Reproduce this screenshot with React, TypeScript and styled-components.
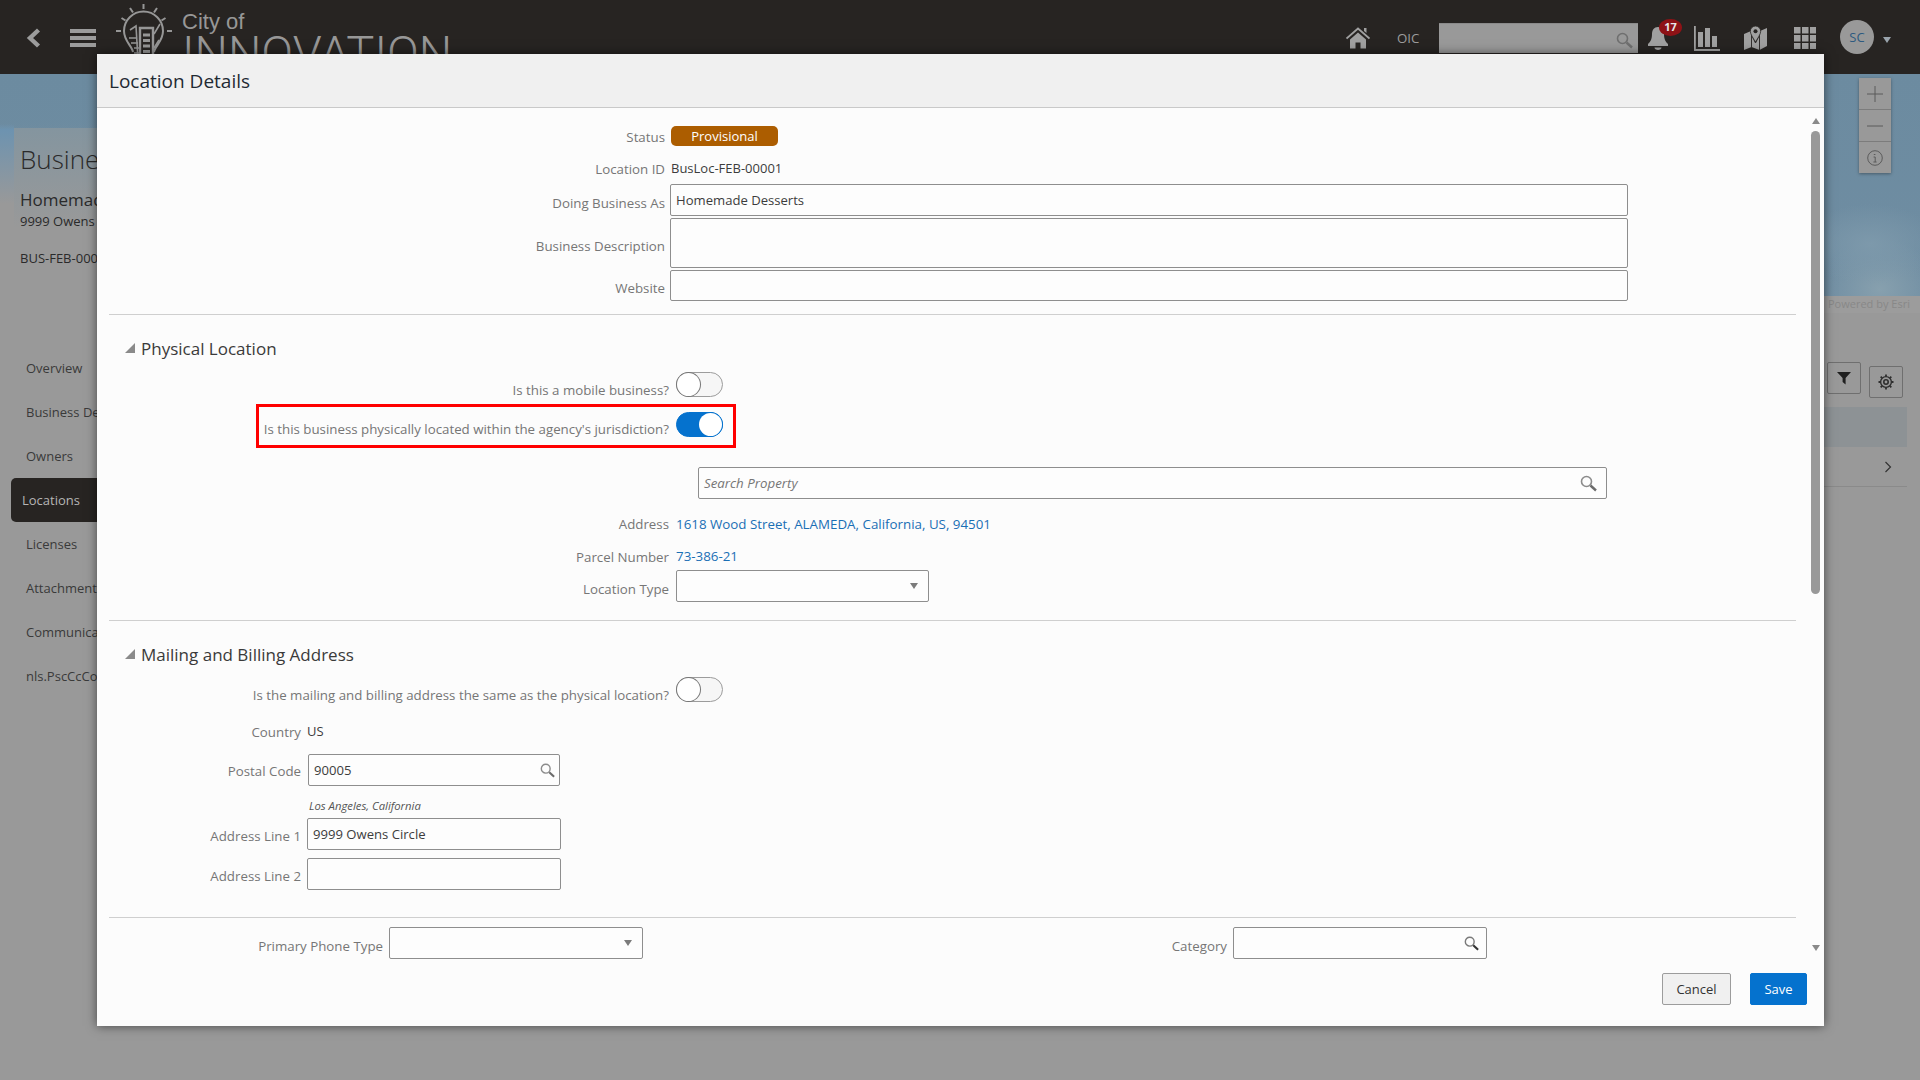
import React from 'react';
import styled, { createGlobalStyle } from 'styled-components';

const FONT = `"Open Sans", Lato, "Liberation Sans", sans-serif`;

const navItems = ['Overview', 'Business De', 'Owners', 'Locations', 'Licenses', 'Attachment', 'Communica', 'nls.PscCcCo'];

export default function App() {
  return (
    <Page>
      <GlobalStyle />
      <Header>
        <BackIcon />
        <MenuBars>
          <i />
          <i />
          <i />
        </MenuBars>
        <LogoBulb />
        <LogoText>
          <LogoCity>City of</LogoCity>
          <LogoName>INNOVATION</LogoName>
        </LogoText>
        <HeaderSpacer />
        <HeaderItem $ml={0}>
          <HomeIcon />
        </HeaderItem>
        <OicText>OIC</OicText>
        <HeaderSearch>
          <SearchIcon size={17} glass="#6f6f6f" handle="#6f6f6f" />
        </HeaderSearch>
        <BellWrap>
          <BellIcon />
          <BellBadge>17</BellBadge>
        </BellWrap>
        <HeaderItem $ml={26}>
          <ChartIcon />
        </HeaderItem>
        <HeaderItem $ml={24}>
          <MapPinIcon />
        </HeaderItem>
        <HeaderItem $ml={27}>
          <GridIcon />
        </HeaderItem>
        <Avatar>SC</Avatar>
        <AvatarCaret />
      </Header>

      <Workspace>
        <MapBand>
          <MapControls>
            <MapControl>
              <svg width="16" height="16" viewBox="0 0 16 16">
                <path d="M8 0v16M0 8h16" stroke="#5b5b5b" strokeWidth="1" fill="none" />
              </svg>
            </MapControl>
            <MapControl>
              <svg width="16" height="2" viewBox="0 0 16 2">
                <path d="M0 1h16" stroke="#5b5b5b" strokeWidth="1" fill="none" />
              </svg>
            </MapControl>
            <MapControl>
              <svg width="16" height="16" viewBox="0 0 16 16">
                <circle cx="8" cy="8" r="7.3" stroke="#5b5b5b" strokeWidth="1" fill="none" />
                <path d="M6.8 4.5h1.6M6.6 7h1.6v5M6.4 12h3.2" stroke="#5b5b5b" strokeWidth="1" fill="none" />
              </svg>
            </MapControl>
          </MapControls>
        </MapBand>
        <EsriRow>Powered by Esri</EsriRow>
        <Toolbar>
          <ToolButton $mt={0}>
            <svg width="14" height="14" viewBox="0 0 14 14">
              <path d="M0 1h14L8.6 7v6.5L5.6 11V7z" fill="#1f1f1f" />
            </svg>
          </ToolButton>
          <ToolButton $mt={4}>
            <svg width="16" height="16" viewBox="0 0 16 16" fill="none" stroke="#2e2e2e">
              <circle cx="8" cy="8" r="2.2" strokeWidth="1.6" />
              <circle cx="8" cy="8" r="5.4" strokeWidth="1.4" />
              <path d="M8 0.5v2M8 13.5v2M0.5 8h2M13.5 8h2M2.7 2.7l1.4 1.4M11.9 11.9l1.4 1.4M2.7 13.3l1.4-1.4M11.9 4.1l1.4-1.4" strokeWidth="1.8" />
            </svg>
          </ToolButton>
        </Toolbar>
        <TableHead />
        <TableRow>
          <svg width="8" height="12" viewBox="0 0 8 12">
            <path d="M1.5 1l5 5-5 5" stroke="#333" strokeWidth="1.2" fill="none" />
          </svg>
        </TableRow>

        <SidePanel>
          <PanelIntro>
            <PanelTitle>Business</PanelTitle>
            <PanelName>Homemade Desserts</PanelName>
            <PanelLine>9999 Owens Circle</PanelLine>
            <PanelId>BUS-FEB-00001</PanelId>
          </PanelIntro>
          <NavList>
            {navItems.map((item) => (
              <NavItem key={item} $active={item === 'Locations'}>
                {item}
              </NavItem>
            ))}
          </NavList>
        </SidePanel>
      </Workspace>

      <Dialog>
        <DialogHeader>Location Details</DialogHeader>
        <DialogBody>
          <Form>
            <Field $h={20} $mt={18} $gap={6}>
              <Label $w={556} $drop={2}>Status</Label>
              <StatusBadge>Provisional</StatusBadge>
            </Field>
            <Field $h={20} $mt={12} $gap={6}>
              <Label $w={556} $drop={2}>Location ID</Label>
              <Value>BusLoc-FEB-00001</Value>
            </Field>
            <Field $h={32} $mt={6} $gap={5}>
              <Label $w={556} $drop={5}>Doing Business As</Label>
              <TextBox $w={958}>Homemade Desserts</TextBox>
            </Field>
            <Field $h={50} $mt={2} $gap={5}>
              <Label $w={556} $drop={5}>Business Description</Label>
              <TextBox $w={958} />
            </Field>
            <Field $h={31} $mt={2} $gap={5}>
              <Label $w={556} $drop={4}>Website</Label>
              <TextBox $w={958} />
            </Field>
            <Divider $mt={13} />

            <SectionTitle $mt={21}>
              <Disclosure />
              Physical Location
            </SectionTitle>
            <Field $h={25} $mt={12} $gap={7}>
              <Label $w={560} $drop={10}>Is this a mobile business?</Label>
              <Toggle $on={false} />
            </Field>
            <Highlight>
              <Label $drop={9}>Is this business physically located within the agency's jurisdiction?</Label>
              <Toggle $on />
            </Highlight>
            <Field $h={32} $mt={19} $gap={0}>
              <Label $w={589} />
              <TextBox $w={909} $pad={9}>
                <Placeholder>Search Property</Placeholder>
                <SearchIcon size={17} glass="#8c8c8c" handle="#6b6b6b" />
              </TextBox>
            </Field>
            <Field $h={20} $mt={15} $gap={7}>
              <Label $w={560}>Address</Label>
              <Link>1618 Wood Street, ALAMEDA, California, US, 94501</Link>
            </Field>
            <Field $h={20} $mt={12} $gap={7}>
              <Label $w={560} $drop={1}>Parcel Number</Label>
              <Link>73-386-21</Link>
            </Field>
            <Field $h={32} $mt={4} $gap={7}>
              <Label $w={560} $drop={5}>Location Type</Label>
              <TextBox $w={253} $pad={7}>
                <span />
                <Caret />
              </TextBox>
            </Field>
            <Divider $mt={18} />

            <SectionTitle $mt={21}>
              <Disclosure />
              Mailing and Billing Address
            </SectionTitle>
            <Field $h={25} $mt={11} $gap={7}>
              <Label $w={560} $drop={10}>Is the mailing and billing address the same as the physical location?</Label>
              <Toggle $on={false} />
            </Field>
            <Field $h={20} $mt={19} $gap={6}>
              <Label $w={192} $drop={1}>Country</Label>
              <Value>US</Value>
            </Field>
            <Field $h={32} $mt={13} $gap={7}>
              <Label $w={192} $drop={1}>Postal Code</Label>
              <TextBox $w={252} $pad={4}>
                <span>90005</span>
                <SearchIcon size={15} glass="#8c8c8c" handle="#6b6b6b" />
              </TextBox>
            </Field>
            <CityHint>Los Angeles, California</CityHint>
            <Field $h={32} $mt={4} $gap={6}>
              <Label $w={192} $drop={3}>Address Line 1</Label>
              <TextBox $w={254}>9999 Owens Circle</TextBox>
            </Field>
            <Field $h={32} $mt={8} $gap={6}>
              <Label $w={192} $drop={4}>Address Line 2</Label>
              <TextBox $w={254} />
            </Field>
            <Divider $mt={27} />
            <Field $h={32} $mt={9} $gap={6}>
              <Label $w={274} $drop={5}>Primary Phone Type</Label>
              <TextBox $w={254} $pad={7}>
                <span />
                <Caret />
              </TextBox>
              <Label $w={578} $drop={5}>Category</Label>
              <TextBox $w={254} $pad={7}>
                <span />
                <SearchIcon size={15} glass="#7a7a7a" handle="#333" />
              </TextBox>
            </Field>
          </Form>
          <ScrollTrack>
            <ScrollArrow $up />
            <ScrollThumb />
            <ScrollArrow />
          </ScrollTrack>
        </DialogBody>
        <DialogFooter>
          <CancelButton>Cancel</CancelButton>
          <SaveButton>Save</SaveButton>
        </DialogFooter>
      </Dialog>
    </Page>
  );
}

function BackIcon() {
  return (
    <svg width="15" height="20" viewBox="0 0 15 20">
      <path d="M12.5 2L4 10l8.5 8" stroke="#9c9c9c" strokeWidth="4.4" fill="none" />
    </svg>
  );
}

function LogoBulb() {
  return (
    <LogoMark width="56" height="60" viewBox="0 0 56 60" fill="none" stroke="#969696" strokeWidth="2">
      <path d="M27.5 0v5M14 4l3 4.5M41 4l-3 4.5M5.5 14l4 2.5M49.5 14l-4 2.5M0 27h5M51 27h5" />
      <path d="M17 48c-1-6-9-11-9-21a19.5 19.5 0 0 1 39 0c0 10-8 15-9 21" />
      <path d="M14 26l6-4 2 34M13 34h8M15 39h7M18 44h5M18 49h5" strokeWidth="1.6" />
      <path d="M24 24h13v32H24z" strokeWidth="2.4" />
      <path d="M27 31h7M27 36.500h7M27 42h7M27 47.500h7" strokeWidth="3" />
      <path d="M38 30l6-10M38 44l5-8" strokeWidth="1.6" />
    </LogoMark>
  );
}

function HomeIcon() {
  return (
    <svg width="24" height="22" viewBox="0 0 24 22">
      <path d="M0.5 11.5L12 1.5l11.5 10" stroke="#a0a0a0" strokeWidth="1.8" fill="none" />
      <path d="M4 12.5L12 5.500l8 7v9h-5.500v-6h-5v6H4z" fill="#a0a0a0" />
      <path d="M18 1h2.500v5L18 4z" fill="#a0a0a0" />
    </svg>
  );
}

function BellIcon() {
  return (
    <svg width="20" height="24" viewBox="0 0 20 24">
      <path d="M10 1c-4 0-6 3-6 7 0 6-2 8-4 10v2h20v-2c-2-2-4-4-4-10 0-4-2-7-6-7z" fill="#a0a0a0" />
      <path d="M6.500 21.500h7c0 1.500-1.500 2.500-3.500 2.500s-3.500-1-3.500-2.500z" fill="#a0a0a0" />
    </svg>
  );
}

function ChartIcon() {
  return (
    <svg width="26" height="25" viewBox="0 0 26 25" fill="#a0a0a0">
      <path d="M0 0h1.800v23H26v2H0z" />
      <rect x="4" y="6" width="5" height="15" />
      <rect x="11" y="2" width="5" height="19" />
      <rect x="18" y="10" width="5" height="11" />
    </svg>
  );
}

function MapPinIcon() {
  return (
    <svg width="23" height="24" viewBox="0 0 23 24">
      <path d="M0 8l7-3h9l7-3v18l-7.500 4-8-3L0 24z" fill="#a0a0a0" />
      <path d="M7.500 8v13M15.500 8v16M7.500 9l4 8 4-8" stroke="#272422" strokeWidth="0.9" fill="none" />
      <path d="M11.500 0a5.200 5.200 0 0 1 5.200 5.200c0 3-3 7-5.200 10.800C9.300 12.200 6.300 8.200 6.300 5.200A5.200 5.200 0 0 1 11.500 0z" fill="#a0a0a0" stroke="#272422" strokeWidth="0.8" />
      <circle cx="11.500" cy="5.200" r="2" fill="#272422" />
    </svg>
  );
}

function GridIcon() {
  return (
    <svg width="22" height="22" viewBox="0 0 22 22" fill="#a0a0a0">
      {[0, 8, 16].map((y) =>
        [0, 8, 16].map((x) => <rect key={`${x}-${y}`} x={x} y={y} width="6.500" height="6.500" />),
      )}
    </svg>
  );
}

function SearchIcon({ size, glass, handle }: { size: number; glass: string; handle: string }) {
  return (
    <svg width={size} height={size} viewBox="0 0 17 17" fill="none">
      <circle cx="6.500" cy="6.500" r="5" stroke={glass} strokeWidth="1.600" />
      <path d="M10.500 10.500l5.500 5" stroke={handle} strokeWidth="2.400" />
    </svg>
  );
}

const GlobalStyle = createGlobalStyle`
  html, body {
    margin: 0;
    padding: 0;
  }
  body {
    background: #999999;
    font-family: ${FONT};
    font-size: 13px;
    color: #333333;
  }
  * {
    box-sizing: border-box;
  }
`;

const Page = styled.div`
  position: relative;
  width: 1920px;
  height: 1080px;
  overflow: hidden;
  background: #999999;
`;

const Header = styled.header`
  display: flex;
  align-items: center;
  height: 74px;
  padding: 2px 29px 0 26px;
  background: #272422;
`;

const MenuBars = styled.div`
  display: flex;
  flex-direction: column;
  gap: 3px;
  width: 26px;
  margin-left: 29px;
  i {
    display: block;
    height: 4px;
    background: #9c9c9c;
  }
`;

const LogoMark = styled.svg`
  align-self: flex-start;
  flex: none;
  margin: 2px 0 0 20px;
`;

const LogoText = styled.div`
  align-self: flex-start;
  margin-left: 10px;
  color: #979797;
  font-family: "Liberation Sans", sans-serif;
`;

const LogoCity = styled.div`
  margin-top: 8px;
  font-size: 22px;
  line-height: 24px;
`;

const LogoName = styled.div`
  font-family: Roboto, "Liberation Sans", sans-serif;
  font-weight: 300;
  font-size: 47px;
  line-height: 38px;
`;

const HeaderSpacer = styled.div`
  flex: 1;
`;

const HeaderItem = styled.div<{ $ml: number }>`
  display: flex;
  margin-left: ${(p) => p.$ml}px;
`;

const OicText = styled.span`
  flex: none;
  width: 24px;
  margin-left: 27px;
  color: #9c9c9c;
  font-size: 13.300px;
  white-space: nowrap;
`;

const HeaderSearch = styled.div`
  display: flex;
  align-items: flex-start;
  justify-content: flex-end;
  width: 199px;
  height: 30px;
  margin-left: 18px;
  padding: 8px 5px 0 0;
  background: #999999;
  border-top: 1px solid #8a8a8a;
`;

const BellWrap = styled.div`
  position: relative;
  display: flex;
  margin-left: 10px;
`;

const BellBadge = styled.span`
  position: absolute;
  top: -7px;
  left: 11px;
  width: 23px;
  height: 17px;
  border-radius: 50%;
  background: #8e1216;
  color: #e8e8e8;
  font-size: 11px;
  font-weight: 700;
  line-height: 16px;
  text-align: center;
`;

const Avatar = styled.div`
  display: flex;
  align-items: center;
  justify-content: center;
  width: 34px;
  height: 34px;
  margin: 0 0 3px 24px;
  border-radius: 50%;
  background: #999999;
  color: #2d5a80;
  font-size: 13px;
`;

const AvatarCaret = styled.i`
  width: 0;
  height: 0;
  margin: 4px 0 0 9px;
  border-left: 4.500px solid transparent;
  border-right: 4.500px solid transparent;
  border-top: 6px solid #9aa4ad;
`;

const Workspace = styled.main`
  position: relative;
`;

const MapBand = styled.section`
  display: flex;
  justify-content: flex-end;
  height: 222px;
  padding: 4px 29px 0 0;
  background:
    linear-gradient(to bottom, rgba(109, 147, 176, 0) 50px, #6d93b0 56px, #999999 130px) left top / 14px 100% no-repeat,
    linear-gradient(to bottom, rgba(153, 153, 153, 0) 50px, #999999 150px) left top / 100px 100% no-repeat,
    radial-gradient(70px 40px at 1870px 170px, #7d99ab, transparent),
    radial-gradient(60px 50px at 1880px 215px, #87a0ae, transparent),
    linear-gradient(to bottom, #6c8ba0, #6f8da2);
`;

const MapControls = styled.div`
  width: 32px;
  height: 95px;
  box-shadow: 0 1px 3px rgba(0, 0, 0, 0.35);
`;

const MapControl = styled.div`
  display: flex;
  align-items: center;
  justify-content: center;
  height: 32px;
  background: #999999;
  border-bottom: 1px solid #7c7c7c;
  &:last-child {
    height: 31px;
    border-bottom: 0;
  }
`;

const EsriRow = styled.div`
  height: 17px;
  padding-left: 1828px;
  background: linear-gradient(to right, #999999 1820px, #9c9c9c 1820px);
  color: #888888;
  font-size: 11px;
  line-height: 15px;
  white-space: nowrap;
`;

const Toolbar = styled.div`
  display: flex;
  gap: 8px;
  align-items: flex-start;
  justify-content: flex-end;
  padding: 49px 17px 0 0;
  height: 94px;
`;

const ToolButton = styled.div<{ $mt: number }>`
  display: flex;
  align-items: center;
  justify-content: center;
  width: 34px;
  height: 32px;
  margin-top: ${(p) => p.$mt}px;
  border: 1px solid #6f6f6f;
  border-radius: 2px;
`;

const TableHead = styled.div`
  width: 1807px;
  height: 40px;
  margin-left: 100px;
  background: #8d9295;
`;

const TableRow = styled.div`
  display: flex;
  align-items: center;
  justify-content: flex-end;
  width: 1807px;
  height: 40px;
  margin-left: 100px;
  padding-right: 15px;
  border-bottom: 1px solid #8a8a8a;
`;

const SidePanel = styled.aside`
  position: absolute;
  top: 54px;
  left: 11px;
  width: 86px;
  overflow: hidden;
`;

const PanelIntro = styled.div`
  height: 218px;
  margin-left: 3px;
  padding: 13px 0 0 6px;
  background: linear-gradient(to bottom, #84959f, #999999 100px);
  color: #2a2a2a;
  white-space: nowrap;
`;

const PanelTitle = styled.div`
  font-size: 26px;
  font-weight: 300;
  line-height: 36px;
`;

const PanelName = styled.div`
  margin-top: 11px;
  font-size: 17px;
  line-height: 24px;
`;

const PanelLine = styled.div`
  font-size: 13px;
  line-height: 18px;
`;

const PanelId = styled.div`
  margin-top: 19px;
  font-size: 13px;
  line-height: 18px;
`;

const NavList = styled.nav`
  display: flex;
  flex-direction: column;
`;

const NavItem = styled.div<{ $active?: boolean }>`
  height: 44px;
  padding-left: ${(p) => (p.$active ? 11 : 15)}px;
  border-radius: 5px 0 0 5px;
  background: ${(p) => (p.$active ? '#272422' : 'transparent')};
  color: ${(p) => (p.$active ? '#b5b5b5' : '#3a3a3a')};
  font-size: 13px;
  line-height: 44px;
  white-space: nowrap;
`;

const Dialog = styled.div`
  position: absolute;
  top: 54px;
  left: 97px;
  display: flex;
  flex-direction: column;
  width: 1727px;
  height: 972px;
  background: #fcfcfc;
  box-shadow: 0 0 10px rgba(0, 0, 0, 0.55);
`;

const DialogHeader = styled.div`
  display: flex;
  align-items: center;
  flex: none;
  height: 54px;
  padding: 1px 0 0 12px;
  background: #f0f0f0;
  border-bottom: 1px solid #c9c9c9;
  color: #1f2a33;
  font-size: 19px;
`;

const DialogBody = styled.div`
  display: flex;
  flex: none;
  height: 852px;
  padding-left: 12px;
  overflow: hidden;
`;

const Form = styled.div`
  flex: none;
  width: 1687px;
`;

const Field = styled.div<{ $h: number; $mt: number; $gap: number }>`
  display: flex;
  align-items: center;
  gap: ${(p) => p.$gap}px;
  height: ${(p) => p.$h}px;
  margin-top: ${(p) => p.$mt}px;
`;

const Label = styled.span<{ $w?: number; $drop?: number }>`
  flex: none;
  width: ${(p) => (p.$w ? `${p.$w}px` : 'auto')};
  padding-top: ${(p) => p.$drop || 0}px;
  color: #767676;
  font-size: 13.300px;
  text-align: right;
  white-space: nowrap;
`;

const Value = styled.span`
  color: #3c3c3c;
  font-size: 13px;
`;

const Link = styled.a`
  color: #1a6fb5;
  font-size: 13.350px;
`;

const StatusBadge = styled.span`
  width: 107px;
  height: 20px;
  border-radius: 5px;
  background: #ac5d00;
  color: #ffffff;
  font-size: 13px;
  line-height: 20px;
  text-align: center;
`;

const TextBox = styled.div<{ $w: number; $pad?: number }>`
  display: flex;
  align-items: center;
  justify-content: ${(p) => (p.$pad ? 'space-between' : 'flex-start')};
  flex: none;
  width: ${(p) => p.$w}px;
  height: 100%;
  padding: 0 ${(p) => p.$pad || 5}px 0 5px;
  background: #fdfdfd;
  border: 1px solid #8e8e8e;
  border-radius: 2px;
  color: #3c3c3c;
  font-size: 13.100px;
`;

const Placeholder = styled.span`
  color: #767676;
  font-style: italic;
  font-size: 13.300px;
`;

const Caret = styled.i`
  width: 0;
  height: 0;
  margin-right: 3px;
  border-left: 4.500px solid transparent;
  border-right: 4.500px solid transparent;
  border-top: 6px solid #7b7b7b;
`;

const Divider = styled.div<{ $mt: number }>`
  height: 1px;
  margin-top: ${(p) => p.$mt}px;
  background: #cfcfcf;
`;

const SectionTitle = styled.div<{ $mt: number }>`
  display: flex;
  align-items: center;
  gap: 6px;
  height: 24px;
  margin-top: ${(p) => p.$mt}px;
  padding-left: 16px;
  color: #3a3a3a;
  font-size: 17px;
`;

const Disclosure = styled.i`
  width: 0;
  height: 0;
  border-bottom: 10px solid #8a8a8a;
  border-left: 10px solid transparent;
`;

const Toggle = styled.span<{ $on: boolean }>`
  position: relative;
  flex: none;
  width: 47px;
  height: 25px;
  border-radius: 13px;
  background: ${(p) => (p.$on ? '#0572ce' : '#f6f6f6')};
  border: 1px solid ${(p) => (p.$on ? '#0572ce' : '#9c9c9c')};
  &::after {
    content: '';
    position: absolute;
    top: 0;
    left: ${(p) => (p.$on ? '22px' : '0')};
    width: 23px;
    height: 23px;
    border-radius: 50%;
    background: #ffffff;
    box-shadow: 0 0 0 1px ${(p) => (p.$on ? '#0572ce' : '#777777')};
  }
`;

const Highlight = styled.div`
  display: flex;
  align-items: center;
  justify-content: flex-end;
  gap: 7px;
  width: 480px;
  height: 44px;
  margin: 7px 0 0 147px;
  padding: 0 10px 3px 0;
  border: 3px solid #ff0000;
`;

const CityHint = styled.div`
  height: 16px;
  margin: 12px 0 0 200px;
  color: #555555;
  font-size: 11.300px;
  font-style: italic;
  line-height: 16px;
`;

const ScrollTrack = styled.div`
  display: flex;
  flex-direction: column;
  align-items: center;
  width: 9px;
  margin-left: 15px;
  padding: 10px 0 9px;
`;

const ScrollArrow = styled.i<{ $up?: boolean }>`
  width: 0;
  height: 0;
  margin-top: ${(p) => (p.$up ? '0' : 'auto')};
  border-left: 4.500px solid transparent;
  border-right: 4.500px solid transparent;
  border-${(p) => (p.$up ? 'bottom' : 'top')}: 6px solid #8a8a8a;
`;

const ScrollThumb = styled.div`
  flex: none;
  width: 9px;
  height: 463px;
  margin-top: 7px;
  border-radius: 5px;
  background: #999999;
`;

const DialogFooter = styled.div`
  display: flex;
  justify-content: flex-end;
  gap: 19px;
  flex: 1;
  padding: 13px 17px 0 0;
`;

const FooterButton = styled.button`
  height: 32px;
  border-radius: 2px;
  font-family: ${FONT};
  font-size: 13px;
`;

const CancelButton = styled(FooterButton)`
  width: 69px;
  background: #f0f0f0;
  border: 1px solid #9c9c9c;
  color: #333333;
`;

const SaveButton = styled(FooterButton)`
  width: 57px;
  background: #0572ce;
  border: 1px solid #0572ce;
  color: #ffffff;
`;
